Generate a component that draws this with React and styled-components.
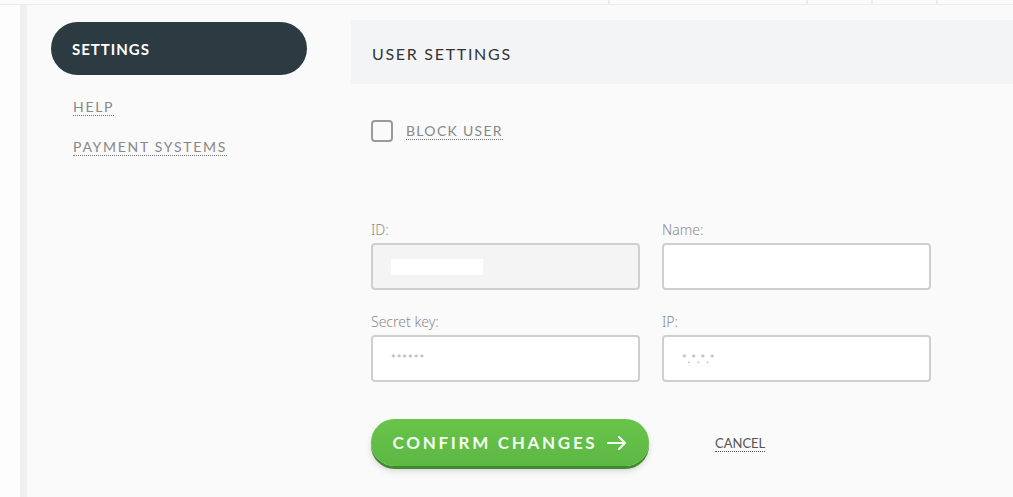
import styled, { createGlobalStyle } from "styled-components";

const GlobalStyle = createGlobalStyle`
  html, body {
    margin: 0;
    padding: 0;
    background: #fcfcfc;
  }
  * { box-sizing: border-box; }
`;

const Page = styled.div`
  width: 1013px;
  height: 497px;
  overflow: hidden;
  display: flex;
  flex-direction: column;
  font-family: "Lato", "Open Sans", sans-serif;
`;

const TopStrip = styled.div`
  height: 5px;
  flex-shrink: 0;
  display: flex;
  border-bottom: 1px solid #ececec;
  background: #fbfbfb;
`;

const StripCell = styled.div`
  width: ${(p) => p.w}px;
  flex-shrink: 0;
  border-right: 2px solid #ececec;
`;

const Body = styled.div`
  flex: 1;
  display: flex;
`;

const Gutter = styled.div`
  width: 27px;
  flex-shrink: 0;
  background: #fdfdfd;
  border-right: 7px solid #f0f0f0;
  box-shadow: 1px 0 2px rgba(0, 0, 0, 0.03);
`;

const Content = styled.div`
  flex: 1;
  display: flex;
  background: #fafafa;
  padding: 17px 0 0 24px;
  gap: 44px;
`;

const Sidebar = styled.nav`
  width: 256px;
  flex-shrink: 0;
  display: flex;
  flex-direction: column;
`;

const ActiveTab = styled.div`
  height: 53px;
  border-radius: 27px;
  background: #2c3a41;
  color: #fff;
  font-weight: 700;
  font-size: 15px;
  letter-spacing: 1px;
  display: flex;
  align-items: center;
  padding-left: 21px;
  margin-bottom: 24px;
`;

const NavLink = styled.a`
  align-self: flex-start;
  margin-left: 22px;
  font-size: 14px;
  letter-spacing: 1.7px;
  color: #888;
  text-decoration: none;
  border-bottom: 1px dotted #777;
  line-height: 16px;
  margin-bottom: 23px;
`;

const Main = styled.section`
  flex: 1;
  display: flex;
  flex-direction: column;
`;

const Header = styled.div`
  height: 64px;
  margin-top: -2px;
  background: #f3f4f6;
  display: flex;
  align-items: center;
  padding: 2px 0 0 21px;
  font-size: 16px;
  letter-spacing: 1.7px;
  color: #333;
`;

const Inner = styled.div`
  padding-left: 20px;
  display: flex;
  flex-direction: column;
`;

const CheckRow = styled.label`
  display: flex;
  align-items: center;
  gap: 13px;
  margin-top: 36px;
`;

const Box = styled.span`
  width: 22px;
  height: 22px;
  border: 2px solid #9a9a9a;
  border-radius: 4px;
  background: #fafafa;
`;

const CheckText = styled.span`
  font-size: 14px;
  letter-spacing: 1.3px;
  color: #888;
  border-bottom: 1px dotted #777;
  line-height: 16px;
`;

const Grid = styled.div`
  display: grid;
  grid-template-columns: 269px 269px;
  column-gap: 22px;
  row-gap: 23px;
  margin-top: 79px;
`;

const Field = styled.div`
  display: flex;
  flex-direction: column;
  gap: 4px;
`;

const Label = styled.span`
  font-family: "Noto Sans", sans-serif;
  font-weight: 300;
  font-size: 14px;
  color: #8a8a8a;
  line-height: 18px;
`;

const InputBox = styled.div`
  height: 47px;
  border: 2px solid #cfcfcf;
  border-radius: 4px;
  background: ${(p) => (p.disabled ? "#f4f4f4" : "#fff")};
  display: flex;
  align-items: center;
  padding-left: 18px;
  font-size: 11px;
  letter-spacing: 1px;
  color: #aaa;
`;

const Blur = styled.span`
  width: 92px;
  height: 16px;
  background: #fff;
  filter: blur(0.5px);
`;

const Actions = styled.div`
  display: flex;
  align-items: center;
  gap: 66px;
  margin-top: 37px;
`;

const ConfirmButton = styled.button`
  width: 278px;
  height: 47px;
  border: none;
  border-radius: 24px;
  background: linear-gradient(#69c44b, #5cb843);
  box-shadow: 0 3px 0 #3f8a2c, 0 5px 6px rgba(0, 0, 0, 0.15);
  color: #f4fff0;
  font-family: "Lato", sans-serif;
  font-weight: 700;
  font-size: 17px;
  letter-spacing: 2.7px;
  display: flex;
  align-items: center;
  justify-content: center;
  gap: 10px;
  cursor: pointer;
`;

const CancelLink = styled.a`
  font-size: 13px;
  color: #555;
  border-bottom: 1px dotted #555;
  line-height: 15px;
  margin-top: 2px;
`;

function Arrow() {
  return (
    <svg width="20" height="14" viewBox="0 0 20 14" fill="none">
      <path d="M1 7h17M12 1l6 6-6 6" stroke="#f4fff0" strokeWidth="2.2" strokeLinecap="round" strokeLinejoin="round" />
    </svg>
  );
}

export default function App() {
  return (
    <Page>
      <GlobalStyle />
      <TopStrip>
        <StripCell w={610} />
        <StripCell w={198} />
        <StripCell w={65} />
        <StripCell w={65} />
      </TopStrip>
      <Body>
        <Gutter />
        <Content>
          <Sidebar>
            <ActiveTab>SETTINGS</ActiveTab>
            <NavLink>HELP</NavLink>
            <NavLink>PAYMENT SYSTEMS</NavLink>
          </Sidebar>
          <Main>
            <Header>USER SETTINGS</Header>
            <Inner>
              <CheckRow>
                <Box />
                <CheckText>BLOCK USER</CheckText>
              </CheckRow>
              <Grid>
                <Field>
                  <Label>ID:</Label>
                  <InputBox disabled>
                    <Blur />
                  </InputBox>
                </Field>
                <Field>
                  <Label>Name:</Label>
                  <InputBox />
                </Field>
                <Field>
                  <Label>Secret key:</Label>
                  <InputBox>******</InputBox>
                </Field>
                <Field>
                  <Label>IP:</Label>
                  <InputBox>*.*.*.*</InputBox>
                </Field>
              </Grid>
              <Actions>
                <ConfirmButton>
                  CONFIRM CHANGES <Arrow />
                </ConfirmButton>
                <CancelLink>CANCEL</CancelLink>
              </Actions>
            </Inner>
          </Main>
        </Content>
      </Body>
    </Page>
  );
}
